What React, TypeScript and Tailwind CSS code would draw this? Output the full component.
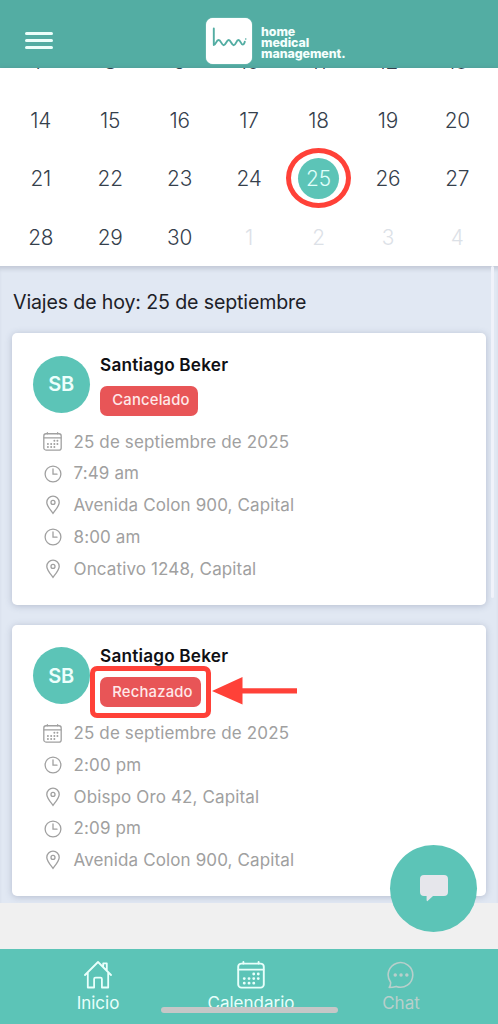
import type { ReactNode } from "react";

const days = [7, 8, 9, 10, 11, 12, 13, 14, 15, 16, 17, 18, 19, 20, 21, 22, 23, 24, 25, 26, 27, 28, 29, 30, 1, 2, 3, 4];

function CalendarIcon({ className }: { className: string }) {
  return (
    <svg viewBox="0 0 28 28" fill="none" stroke="currentColor" strokeWidth="1.9" strokeLinecap="round" className={className}>
      <rect x="1.2" y="2.6" width="25.6" height="24" rx="3.2" />
      <path d="M1.5 8.6h25M6.4 1v1.6M21.6 1v1.6" />
      <path strokeWidth="2.8" d="M16.7 13h.1M21.2 13h.1M7.2 17.6h.1M12 17.6h.1M16.7 17.6h.1M21.2 17.6h.1M7.2 22.2h.1M12 22.2h.1M16.7 22.2h.1" />
    </svg>
  );
}

function ClockIcon() {
  return (
    <svg viewBox="0 0 18 18" fill="none" stroke="currentColor" strokeWidth="1.3" className="size-[18px]">
      <circle cx="9" cy="9" r="7.9" />
      <path d="M9 4v5.2h4" strokeLinecap="round" />
    </svg>
  );
}

function PinIcon() {
  return (
    <svg viewBox="0 0 18 20" fill="none" stroke="currentColor" strokeWidth="1.3" className="h-5 w-[18px]">
      <path d="M9 18.3C7.2 15.9 2.8 10.8 2.8 7.4a6.2 6.2 0 0 1 12.4 0c0 3.4-4.4 8.5-6.2 10.9Z" />
      <circle cx="9" cy="7.4" r="2" />
    </svg>
  );
}

function Row({ icon, children }: { icon: ReactNode; children: ReactNode }) {
  return (
    <div className="flex h-[31.75px] items-center gap-[11.5px] text-[#a0a0a0]">
      <span className="flex w-[19px] shrink-0 justify-center">{icon}</span>
      <span className="whitespace-nowrap pt-px text-[17px] tracking-[0.13px]">{children}</span>
    </div>
  );
}

type Trip = { status: string; start: string; from: string; end: string; to: string; marked?: boolean };

function TripCard({ status, start, from, end, to, marked }: Trip) {
  return (
    <article className="h-[271.5px] shrink-0 rounded-[5px] bg-white pl-[20.5px] shadow-[0_1px_7px_rgba(70,80,115,0.28)]">
      <div className="flex h-[93px] gap-[10.5px] pt-[22.5px]">
        <div className="flex size-[57px] items-center justify-center rounded-full bg-[#5cc4b7] text-[20px] font-semibold tracking-[-0.3px] text-[#edfffc]">SB</div>
        <div className="flex flex-col items-start">
          <h3 className="h-[30px] whitespace-nowrap text-[17.2px] leading-[18px] font-semibold tracking-[0.2px] text-[#101014]">Santiago Beker</h3>
          <div className={marked ? "relative flex h-[30px] w-[101px] items-center justify-center rounded-[7px] bg-[#e85557] text-[14.8px] font-medium tracking-[0.2px] text-[#ffe9e9]" : "relative flex h-[30px] w-[98px] items-center justify-center rounded-[7px] bg-[#e85557] text-[14.8px] font-medium tracking-[0.2px] text-[#ffe9e9]"}>
            <span className="ml-1">{status}</span>
            {marked && (
              <>
                <span className="absolute -left-2.5 -top-[11px] h-[52px] w-[121px] rounded-[7px] border-5 border-[#ff4138]" />
                <svg viewBox="0 0 86 28" className="absolute left-[111.5px] top-0 h-7 w-[86px]" fill="#ff4138">
                  <path d="M0 14 30.5 0v11.2H85v5.2H30.5V27.5Z" />
                </svg>
              </>
            )}
          </div>
        </div>
      </div>
      <div className="pl-[10.5px]">
        <Row icon={<CalendarIcon className="size-[19px]" />}>25 de septiembre de 2025</Row>
        <Row icon={<ClockIcon />}>{start}</Row>
        <Row icon={<PinIcon />}>{from}</Row>
        <Row icon={<ClockIcon />}>{end}</Row>
        <Row icon={<PinIcon />}>{to}</Row>
      </div>
    </article>
  );
}

export default function App() {
  return (
    <div className="relative flex h-[1024px] w-[498px] flex-col overflow-hidden bg-[#f0f0f0] font-['Inter',sans-serif]">
      <header className="relative flex h-[68px] shrink-0 items-start bg-[#53ada3] pl-[25px]">
        <div className="mt-8 flex w-[28px] flex-col gap-[4.5px]">
          <span className="h-[2.6px] rounded-full bg-[#ecfffb]" />
          <span className="h-[2.6px] rounded-full bg-[#ecfffb]" />
          <span className="h-[2.6px] rounded-full bg-[#ecfffb]" />
        </div>
        <div className="ml-[153px] mt-[18px] flex items-start gap-[9px]">
          <div className="size-[46px] rounded-[7px] bg-white shadow-[0_0_1px_#ffffff]">
            <svg viewBox="0 0 46 45" fill="none" stroke="#53ada3" strokeWidth="1.9" strokeLinecap="round" strokeLinejoin="round" className="size-full">
              <path d="M7.8 10v16.5c2.2 0 2.3-5 4.8-5s2.8 5.2 5.1 5.2 2.8-5.2 5-5.2 2.7 5.2 5 5.2 2.5-5.2 4.7-5.2 2.4 4.6 4.3 4.6c1.3 0 1.7-1.6 2.1-2.9" />
              <path strokeWidth="1.5" d="M39.7 20.5h.1" />
            </svg>
          </div>
          <p className="mt-[9.2px] text-[12.4px] leading-[10.7px] font-extrabold tracking-[-0.06px] text-[#f4fffd]">home<br />medical<br />management.</p>
        </div>
      </header>
      <section className="relative h-[198px] shrink-0 overflow-hidden bg-white px-1.5 shadow-[0_1px_5px_rgba(80,85,110,0.35)]">
        <div className="-mt-[35.5px] grid grid-cols-7">
          {days.map((day, i) => (
            <div key={i} className={i < 7 ? "flex h-[58.5px] items-center justify-center pb-[0.4px] text-[20.8px] tracking-[-0.2px]" : "flex h-[58.5px] items-center justify-center text-[20.8px] tracking-[-0.2px]"}>
              {i === 18 ? (
                <span className="relative flex size-[41px] items-center justify-center rounded-full bg-[#5cc4b7] font-light text-[#e0fffa]">
                  25
                  <span className="absolute -left-3 -top-[10.5px] h-[60px] w-[65px] rounded-[50%] border-5 border-[#ff4138]" />
                </span>
              ) : (
                <span className={i > 23 ? "font-light text-[#dce1e7]" : "font-light text-[#35404c]"}>{day}</span>
              )}
            </div>
          ))}
        </div>
      </section>
      <main className="relative flex h-[637px] shrink-0 flex-col gap-5 overflow-hidden bg-[#e1e8f3] px-3 shadow-[inset_0_5px_4px_-2px_rgba(90,95,120,0.22)]">
        <h2 className="-mb-5 h-[67px] shrink-0 pl-px pt-[21.5px] text-[19.6px] leading-7 tracking-[-0.14px] text-[#1d2128]">Viajes de hoy: 25 de septiembre</h2>
        <TripCard status="Cancelado" start="7:49 am" from="Avenida Colon 900, Capital" end="8:00 am" to="Oncativo 1248, Capital" />
        <TripCard status="Rechazado" start="2:00 pm" from="Obispo Oro 42, Capital" end="2:09 pm" to="Avenida Colon 900, Capital" marked />
        <span className="absolute right-[4px] top-0 h-[332px] w-[3px] rounded-full bg-[#f0f2fa]" />
      </main>
      <div className="h-[46px] shrink-0 bg-[#f0f0f0]" />
      <nav className="relative grid h-[75px] shrink-0 grid-cols-[174px_132px_168px] bg-[#5cc4b7] pl-[11px] text-[#e8fffb]">
        <div className="flex flex-col items-center pt-3">
          <svg viewBox="0 0 28 28" fill="none" stroke="currentColor" strokeWidth="1.8" strokeLinecap="round" strokeLinejoin="round" className="size-7">
            <path d="M1 14 14 1l13 13M3.8 11.5V26.5h6.3V18c0-.9.5-1.4 1.4-1.4h5c.9 0 1.4.5 1.4 1.4v8.5h6.3v-15M19.2 6V2.4h3.6v7.2" />
          </svg>
          <span className="mt-[2px] text-[17px] leading-6">Inicio</span>
        </div>
        <div className="flex flex-col items-center pt-3">
          <CalendarIcon className="size-7" />
          <span className="mt-[2px] text-[17px] leading-6">Calendario</span>
        </div>
        <div className="flex flex-col items-center pt-3 text-[#b8cfcb]">
          <svg viewBox="0 0 28 28" fill="none" stroke="currentColor" strokeWidth="1.6" strokeLinejoin="round" strokeLinecap="round" className="size-7">
            <path d="M2.2 26.5c1.2-1.7 1.6-3.5 1.4-5.3A12.3 12.3 0 1 1 9.2 25.4c-2.2.7-4.4 1.1-7 1.1Z" />
            <path strokeWidth="3.4" d="M8.2 14h.1M14 14h.1M19.8 14h.1" />
          </svg>
          <span className="mt-[2px] text-[17px] leading-6">Chat</span>
        </div>
        <span className="absolute left-[161px] top-[58px] h-[6px] w-[177px] rounded-full bg-[#c6c7c7]" />
      </nav>
      <button className="absolute left-[390px] top-[845px] flex size-[87px] items-center justify-center rounded-full bg-[#5cc4b7]" aria-label="Chat">
        <svg viewBox="0 0 28 27" fill="#e6e6eb" className="h-[27px] w-7">
          <path d="M4 0h20q4 0 4 4v13q0 4-4 4H13l-5.4 5q-1 .5-1-1v-4H4q-4 0-4-4V4q0-4 4-4Z" />
        </svg>
      </button>
    </div>
  );
}
